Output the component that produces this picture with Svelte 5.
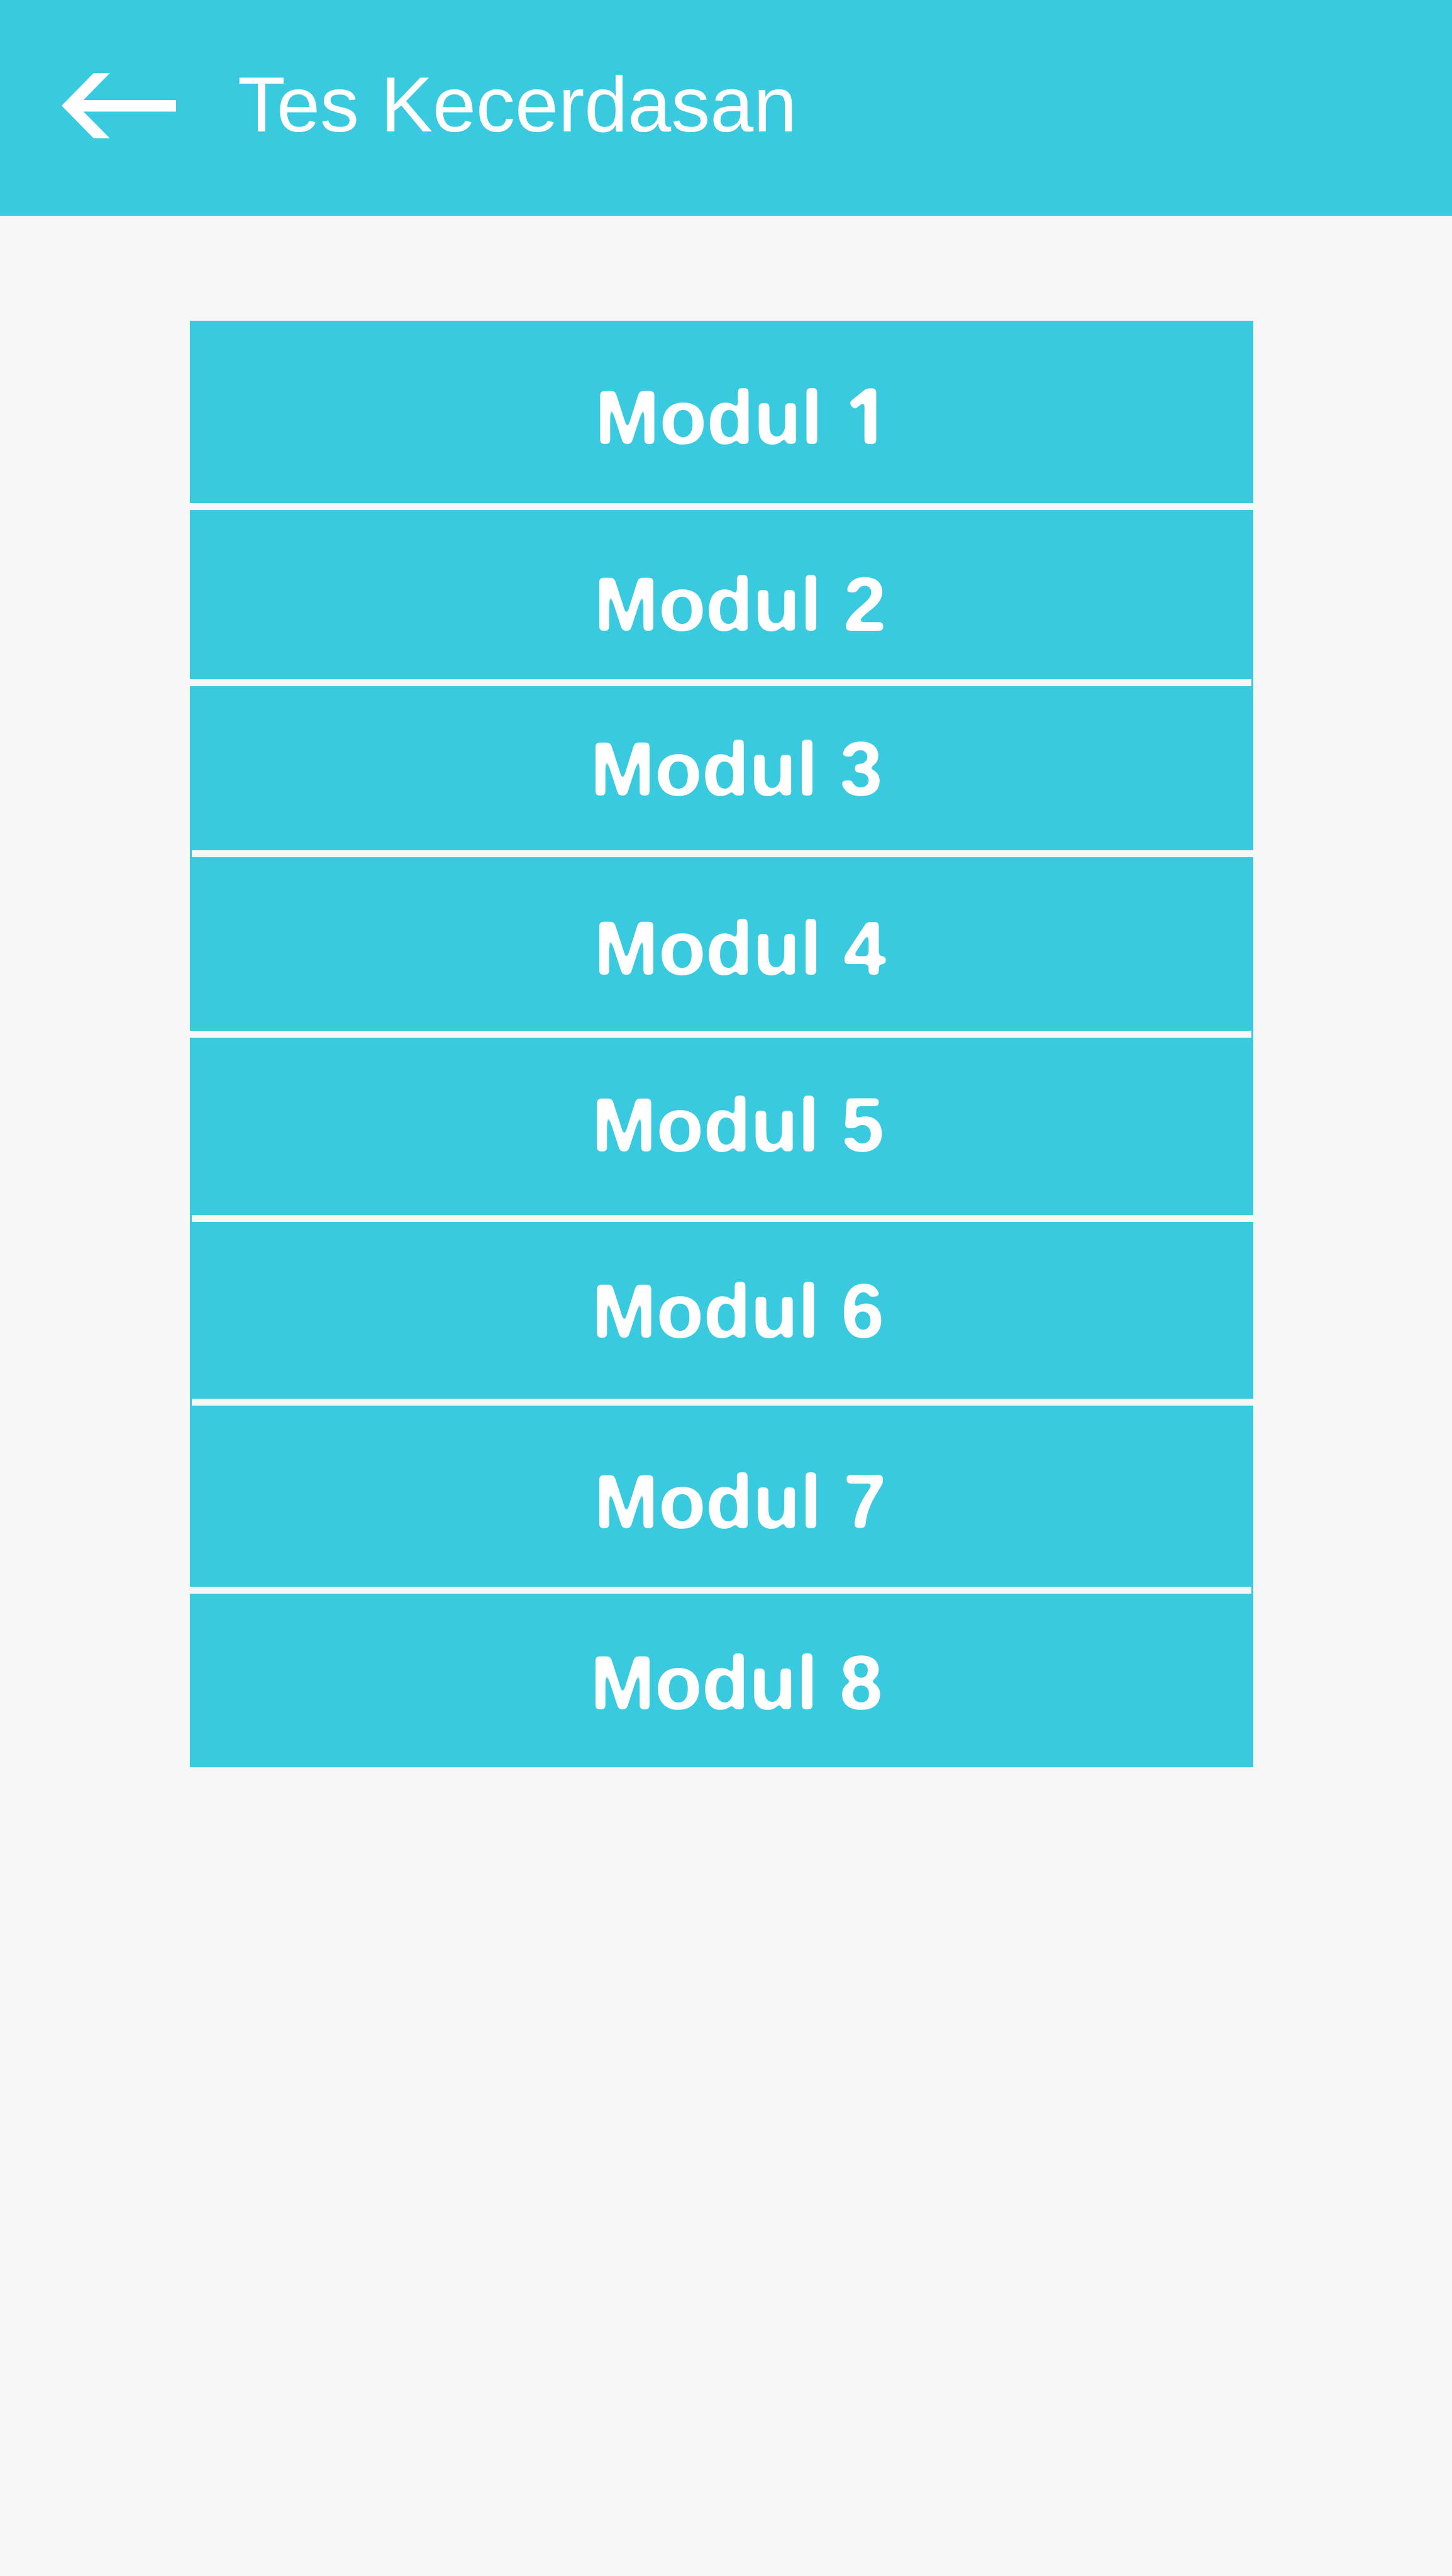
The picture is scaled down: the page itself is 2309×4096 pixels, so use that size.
<script>
  // above/below: room around the label; shift: room before it; inset: side where the divider stops short
  const modules = [
    { number: 1, above: 84, below: 66, shift: 64, inset: 'none' },
    { number: 2, above: 80, below: 49, shift: 59, inset: 'right' },
    { number: 3, above: 62, below: 59, shift: 47, inset: 'left' },
    { number: 4, above: 75, below: 61, shift: 59, inset: 'right' },
    { number: 5, above: 69, below: 73, shift: 52, inset: 'left' },
    { number: 6, above: 72, below: 69, shift: 52, inset: 'left' },
    { number: 7, above: 83, below: 65, shift: 59, inset: 'right' },
    { number: 8, above: 72, below: 64, shift: 47, inset: 'none' }
  ];
</script>

<header class="bar">
  <a class="back" href="#kembali" aria-label="Kembali">
    <svg viewBox="0 0 1003 574" aria-hidden="true">
      <path d="M0 287 L282 0 H424 L191 237 H1003 V339 H191 L424 574 H282 Z" />
    </svg>
  </a>
  <h1>Tes Kecerdasan</h1>
</header>

<main>
  <!-- Rounds off the corners of the label lettering -->
  <svg class="defs" width="0" height="0" aria-hidden="true">
    <filter id="rounded" color-interpolation-filters="sRGB">
      <feGaussianBlur stdDeviation="3" result="soft" />
      <feComponentTransfer in="soft" result="shape">
        <feFuncA type="linear" slope="8" intercept="-3.5" />
      </feComponentTransfer>
      <feFlood flood-color="#fff" />
      <feComposite in2="shape" operator="in" />
    </filter>
  </svg>

  <ul class="list">
    {#each modules as m (m.number)}
      <li class={m.inset}>
        <button
          type="button"
          style:padding-top="{m.above}px"
          style:padding-bottom="{m.below}px"
          style:padding-left="{m.shift}px"
        ><span class="label">Modul <span class:plain={m.number === 1}>{m.number}</span></span></button>
      </li>
    {/each}
  </ul>
</main>

<style>
  :global(body) {
    margin: 0;
    background: #f7f7f7;
    font-family: 'Liberation Sans', Arial, sans-serif;
  }

  .bar {
    display: flex;
    align-items: center;
    gap: 98px;
    padding: 96px 98px 107px;
    background: #39cadf;
    color: #fff;
  }

  .back {
    flex: none;
    width: 182px;
    padding-top: 4px;
  }

  .back svg {
    display: block;
    width: 100%;
    fill: #fff;
  }

  h1 {
    margin: 0;
    font-size: 124px;
    line-height: 140px;
    font-weight: 400;
  }

  main {
    padding: 167px 316px 167px 302px;
  }

  .defs {
    display: block;
  }

  .list {
    margin: 0;
    padding: 0;
    list-style: none;
    background: #39cadf;
  }

  li:not(:last-child)::after {
    content: '';
    display: block;
    height: 11px;
    background: #f7f7f7;
  }

  .left::after {
    margin-left: 3px;
  }

  .right::after {
    margin-right: 3px;
  }

  button {
    display: block;
    box-sizing: border-box;
    width: 100%;
    margin: 0;
    padding: 0;
    border: 0;
    background: none;
    color: #fff;
    font: 700 123px/140px 'Liberation Sans', Arial, sans-serif;
    text-align: center;
    cursor: pointer;
  }

  .label {
    display: block;
    filter: url(#rounded);
  }

  .plain {
    font-family: 'Open Sans', sans-serif;
    line-height: 1px;
  }
</style>
